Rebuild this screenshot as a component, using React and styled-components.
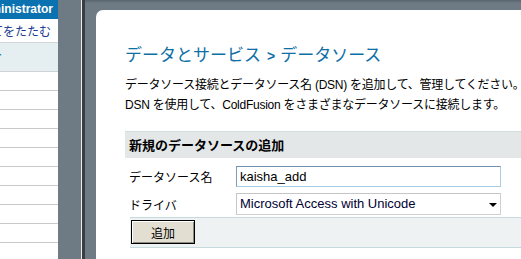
import React from 'react'
import styled, { createGlobalStyle } from 'styled-components'

const GlobalStyle = createGlobalStyle`
  html, body {
    margin: 0;
    padding: 0;
    background: #6e7b84;
    overflow: hidden;
  }
  body {
    font-family: "Liberation Sans", "Noto Sans CJK JP", sans-serif;
  }
`

const Page = styled.div`
  display: flex;
  width: 521px;
  height: 259px;
  overflow: hidden;
`

const Sidebar = styled.div`
  width: 58px;
  flex: none;
  background: #fff;
  display: flex;
  flex-direction: column;
  overflow: hidden;
`

const SideHead = styled.div`
  height: 19px;
  flex: none;
  background: #0b72b1;
  color: #fff;
  font-weight: bold;
  font-size: 12px;
  line-height: 19px;
  display: flex;
  justify-content: flex-end;
  padding-right: 5px;
  white-space: nowrap;
  overflow: hidden;
`

const SideLink = styled.div`
  height: 23px;
  flex: none;
  border-bottom: 1px solid #d3d6d8;
  color: #1a3b8f;
  font-family: "Noto Sans CJK JP", sans-serif;
  font-size: 12px;
  line-height: 23px;
  display: flex;
  justify-content: flex-end;
  padding-right: 7px;
  white-space: nowrap;
  overflow: hidden;
`

const SideGroup = styled.div`
  height: 28px;
  flex: none;
  background: #e5eef0;
  border-bottom: 1px solid #cfd3d5;
  color: #0b72b1;
  font-family: "Noto Sans CJK JP", sans-serif;
  font-size: 12px;
  line-height: 22px;
  white-space: nowrap;
  overflow: hidden;

  span {
    display: inline-block;
    margin-left: -9px;
  }
`

const SideRow = styled.div`
  height: 18px;
  flex: none;
  border-bottom: 1px solid #c9c9c9;
`

const Gutter = styled.div`
  width: 23px;
  flex: none;
  background: #6e7b84;
`

const Divider = styled.div`
  width: 3px;
  flex: none;
  background: #3b3d3f;
  border-left: 1px solid #e8ecee;
`

const Main = styled.div`
  flex: 1;
  display: flex;
  flex-direction: column;
  background: linear-gradient(#59646c 0, #6e7b84 3px, #6e7b84 100%);
  padding: 10px 0 0 11px;
  min-width: 0;
`

const Panel = styled.div`
  flex: 1;
  background: #fff;
  border-top-left-radius: 7px;
  padding: 35px 0 0 29px;
  overflow: hidden;
`

const Title = styled.h1`
  margin: 0;
  font-family: "Noto Sans CJK JP", sans-serif;
  font-weight: normal;
  font-size: 17px;
  line-height: 17px;
  color: #0e6fa6;
  white-space: nowrap;

  b {
    font-family: "Liberation Sans", sans-serif;
    font-weight: bold;
    font-size: 14px;
    margin: 0 5px 0 6px;
  }
`

const Intro = styled.p`
  margin: 10px 0 0;
  font-size: 12px;
  line-height: 20px;
  letter-spacing: -0.25px;
  color: #000;
  white-space: nowrap;
`

const Section = styled.div`
  margin-top: 16px;
`

const SectionHead = styled.div`
  height: 26px;
  background: #e4e7e8;
  border-top: 1px solid #d2dddf;
  padding-left: 4px;
  font-family: "Noto Sans CJK JP", sans-serif;
  font-weight: bold;
  font-size: 13px;
  line-height: 26px;
  color: #000;
`

const Form = styled.div`
  display: grid;
  grid-template-columns: 107px 265px;
  row-gap: 6px;
  align-items: center;
  padding: 8px 0 2px 4px;
`

const Label = styled.div`
  font-family: "Noto Sans CJK JP", sans-serif;
  font-size: 12px;
  color: #000;
`

const Input = styled.div`
  box-sizing: border-box;
  height: ${p => p.$h}px;
  border: 1px solid ${p => (p.$select ? '#cfcfcf' : '#a8cde5')};
  border-top-color: ${p => (p.$select ? '#c6c6c6' : '#6e8fae')};
  border-left-color: ${p => (p.$select ? '#c6c6c6' : '#7f9db9')};
  padding-left: 3px;
  font-size: 13px;
  line-height: ${p => p.$h - 2}px;
  color: ${p => (p.$select ? '#000033' : '#000')};
  display: flex;
  align-items: center;
  justify-content: space-between;
  padding-right: 3px;
`

const Arrow = styled.span`
  width: 0;
  height: 0;
  border-left: 4px solid transparent;
  border-right: 4px solid transparent;
  border-top: 4px solid #000;
  margin-top: 1px;
`

const ButtonBar = styled.div`
  margin-left: 5px;
  height: 27px;
  background: #eef2f2;
  border-top: 1px solid #c6dade;
  border-bottom: 1px solid #c6dade;
  padding: 2px 0 0 1px;
  box-sizing: content-box;
`

const Button = styled.button`
  box-sizing: border-box;
  width: 64px;
  height: 24px;
  margin: 0;
  padding: 0;
  background: #e2dfd2;
  border: 1px solid #000;
  box-shadow: inset 1px 1px 0 #fff, inset -1px -1px 0 #8e8b80;
  font-family: "Noto Sans CJK JP", sans-serif;
  font-size: 12px;
  color: #000;
`

export default function App () {
  return (
    <>
      <GlobalStyle />
      <Page>
        <Sidebar>
          <SideHead>Administrator</SideHead>
          <SideLink>すべてをたたむ</SideLink>
          <SideGroup><span>ト</span></SideGroup>
          {Array.from({ length: 10 }).map((_, i) => <SideRow key={i} />)}
        </Sidebar>
        <Gutter />
        <Divider />
        <Main>
          <Panel>
            <Title>データとサービス<b>&gt;</b>データソース</Title>
            <Intro>
              データソース接続とデータソース名 (DSN) を追加して、管理してください。<br />
              DSN を使用して、ColdFusion をさまざまなデータソースに接続します。
            </Intro>
            <Section>
              <SectionHead>新規のデータソースの追加</SectionHead>
              <Form>
                <Label>データソース名</Label>
                <Input $h={21}>kaisha_add</Input>
                <Label>ドライバ</Label>
                <Input $h={22} $select>
                  Microsoft Access with Unicode
                  <Arrow />
                </Input>
              </Form>
              <ButtonBar>
                <Button>追加</Button>
              </ButtonBar>
            </Section>
          </Panel>
        </Main>
      </Page>
    </>
  )
}
